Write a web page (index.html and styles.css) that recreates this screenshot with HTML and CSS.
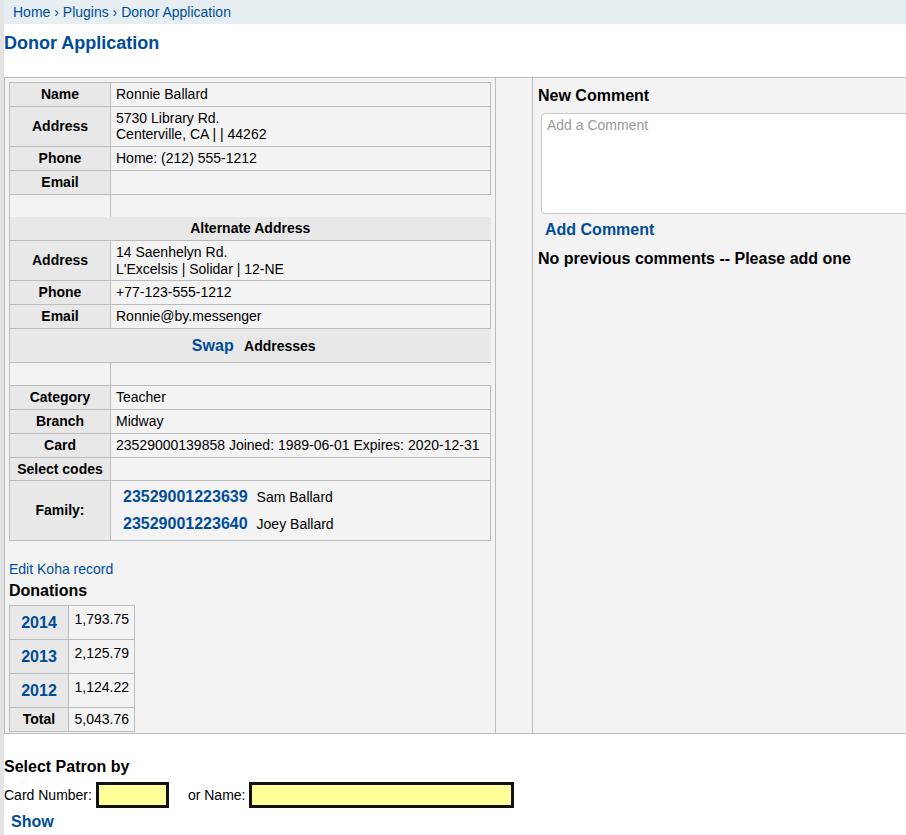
FILE: index.html
```
<!DOCTYPE html>
<html>
<head>
<meta charset="utf-8">
<title>Donor Application</title>
<link rel="stylesheet" href="styles.css">
</head>
<body>
<div class="page">
  <div class="breadcrumbs"><a href="#">Home</a> › <a href="#">Plugins</a> › <span>Donor Application</span></div>
  <h1 class="title">Donor Application</h1>

  <div class="panel">
    <div class="col-left">
      <table class="patron">
        <colgroup><col class="lab"><col></colgroup>
        <tbody>
          <tr><th>Name</th><td>Ronnie Ballard</td></tr>
          <tr><th>Address</th><td>5730 Library Rd.<br>Centerville, CA | | 44262</td></tr>
          <tr><th>Phone</th><td>Home: (212) 555-1212</td></tr>
          <tr><th>Email</th><td>&nbsp;</td></tr>
          <tr><th class="blank">&nbsp;</th><td class="blank">&nbsp;</td></tr>
          <tr><th class="section" colspan="2">Alternate Address</th></tr>
          <tr><th>Address</th><td>14 Saenhelyn Rd.<br>L'Excelsis | Solidar | 12-NE</td></tr>
          <tr><th>Phone</th><td>+77-123-555-1212</td></tr>
          <tr><th>Email</th><td>Ronnie@by.messenger</td></tr>
          <tr><th class="section swap" colspan="2"><a class="btn" href="#">Swap</a> Addresses</th></tr>
          <tr><th class="blank">&nbsp;</th><td class="blank">&nbsp;</td></tr>
          <tr><th>Category</th><td>Teacher</td></tr>
          <tr><th>Branch</th><td>Midway</td></tr>
          <tr><th>Card</th><td>23529000139858 Joined: 1989-06-01 Expires: 2020-12-31</td></tr>
          <tr><th>Select codes</th><td>&nbsp;</td></tr>
          <tr>
            <th>Family:</th>
            <td>
              <table class="family">
                <tr><td class="fam-num"><a class="fam-link" href="#">23529001223639</a></td><td class="fam-name">Sam Ballard</td></tr>
                <tr><td class="fam-num"><a class="fam-link" href="#">23529001223640</a></td><td class="fam-name">Joey Ballard</td></tr>
              </table>
            </td>
          </tr>
        </tbody>
      </table>

      <a class="edit-link" href="#">Edit Koha record</a>
      <h3 class="subhead donations-title">Donations</h3>
      <table class="donations">
        <colgroup><col class="yr"><col class="amt"></colgroup>
        <tr><th><a class="btn" href="#">2014</a></th><td class="top">1,793.75</td></tr>
        <tr><th><a class="btn" href="#">2013</a></th><td class="top">2,125.79</td></tr>
        <tr><th><a class="btn" href="#">2012</a></th><td class="top">1,124.22</td></tr>
        <tr><th class="total">Total</th><td>5,043.76</td></tr>
      </table>
    </div>
    <div class="col-mid"></div>
    <div class="col-right">
      <h3 class="subhead">New Comment</h3>
      <textarea class="comment-box" placeholder="Add a Comment"></textarea>
      <a class="btn btn-block add-comment" href="#">Add Comment</a>
      <h3 class="subhead no-comments">No previous comments -- Please add one</h3>
    </div>
  </div>

  <div class="select-patron">
    <h3 class="subhead">Select Patron by</h3>
    <div class="form-row">
      <label>Card Number:</label>
      <input class="field field-card" type="text">
      <label>or Name:</label>
      <input class="field field-name" type="text">
    </div>
    <a class="btn btn-block" href="#">Show</a>
  </div>
</div>
</body>
</html>
```
FILE: styles.css
```
html, body {
  margin: 0;
  padding: 0;
}
body {
  background: #e3e3e3;
  font-family: "Liberation Sans", Arial, sans-serif;
  font-size: 14px;
  color: #000;
}
.page {
  margin-left: 4px;
  background: #fff;
  min-height: 100vh;
  overflow: hidden;
}
a {
  color: #004c99;
  text-decoration: none;
}

.breadcrumbs {
  background: #e6eef2;
  padding: 4px 9px;
  line-height: 16px;
  color: #004c99;
}

.title {
  margin: 8.5px 0 23.5px 0;
  font-size: 18px;
  line-height: 21px;
  font-weight: bold;
  color: #004c99;
}

.panel {
  display: flex;
  background: #f3f3f3;
  border: 1px solid #bcbcbc;
  border-right: none;
}
.col-left {
  width: 482px;
  padding: 4px 4px 1px 4px;
  border-right: 1px solid #bcbcbc;
  flex: none;
}
.col-mid {
  width: 36px;
  flex: none;
  border-right: 1px solid #bcbcbc;
}
.col-right {
  flex: 1;
  min-width: 0;
  overflow: hidden;
  padding: 9px 0 0 5px;
}

.subhead {
  margin: 0;
  font-size: 16px;
  font-weight: bold;
  line-height: normal;
}

/* patron table */
.patron {
  width: 482px;
  border-collapse: collapse;
  table-layout: fixed;
}
.patron col.lab {
  width: 101px;
}
.patron th,
.patron td {
  border: 1px solid #bcbcbc;
  padding: 3px 5px;
  line-height: 16.7px;
}
.patron th {
  background: #e8e8e8;
  font-size: 14px;
  font-weight: bold;
  text-align: center;
}
.patron td {
  text-align: left;
  font-size: 14px;
}
.patron th.blank {
  background: transparent;
  border-bottom: none;
}
.patron td.blank {
  border: none;
}
.patron th.section {
  border-top: none;
  border-right: none;
}

.family {
  border-collapse: collapse;
}
.patron .family td {
  border: none;
  line-height: 16.5px;
}
.patron .family td.fam-num {
  padding: 5px 2px 5px 7px;
}
.patron .family td.fam-name {
  padding: 5px 5px 5px 7px;
}
.fam-link {
  font-size: 16px;
  font-weight: bold;
}

.btn {
  display: inline-block;
  padding: 4px 7px;
  font-family: "Liberation Sans", Arial, sans-serif;
  font-size: 16px;
  line-height: 19px;
  font-weight: bold;
  color: #004c99;
}
.btn-block {
  display: block;
  width: max-content;
}

.edit-link {
  display: block;
  width: max-content;
  margin-top: 19.5px;
  line-height: normal;
}
.donations-title {
  margin-top: 5px;
}

/* donations */
.donations {
  margin-top: 5.5px;
  border-collapse: collapse;
  table-layout: fixed;
  width: 125px;
}
.donations col.yr {
  width: 59px;
}
.donations col.amt {
  width: 66px;
}
.donations th,
.donations td {
  border: 1px solid #bcbcbc;
  line-height: 16.5px;
}
.donations th {
  background: #e8e8e8;
  padding: 3px 0;
  text-align: center;
}
.donations th.total {
  font-size: 14px;
  font-weight: bold;
}
.donations td {
  padding: 3px 5px;
  text-align: right;
}
.donations td.top {
  vertical-align: top;
  padding-top: 5px;
}

/* comments */
.comment-box {
  display: block;
  box-sizing: border-box;
  width: 420px;
  height: 101px;
  margin: 7.5px 0 0 3px;
  padding: 3px 5px;
  border: 1px solid #c8c8c8;
  border-radius: 4px;
  background: #fff;
  font-family: "Liberation Sans", Arial, sans-serif;
  font-size: 14px;
  resize: none;
}
.comment-box::placeholder {
  color: #999;
}
.add-comment {
  margin-top: 2px;
}
.no-comments {
  margin-top: 7px;
}

/* select patron */
.select-patron {
  padding-top: 24px;
}
.form-row {
  display: flex;
  align-items: center;
  margin-top: 6.5px;
}
.field {
  box-sizing: border-box;
  height: 26px;
  border: 3px solid #111;
  background: #ffff99;
  margin: 0;
  padding: 0 2px;
}
.field-card {
  width: 73px;
  margin-left: 4px;
  margin-right: 19px;
}
.field-name {
  width: 265px;
  margin-left: 3px;
}
```
